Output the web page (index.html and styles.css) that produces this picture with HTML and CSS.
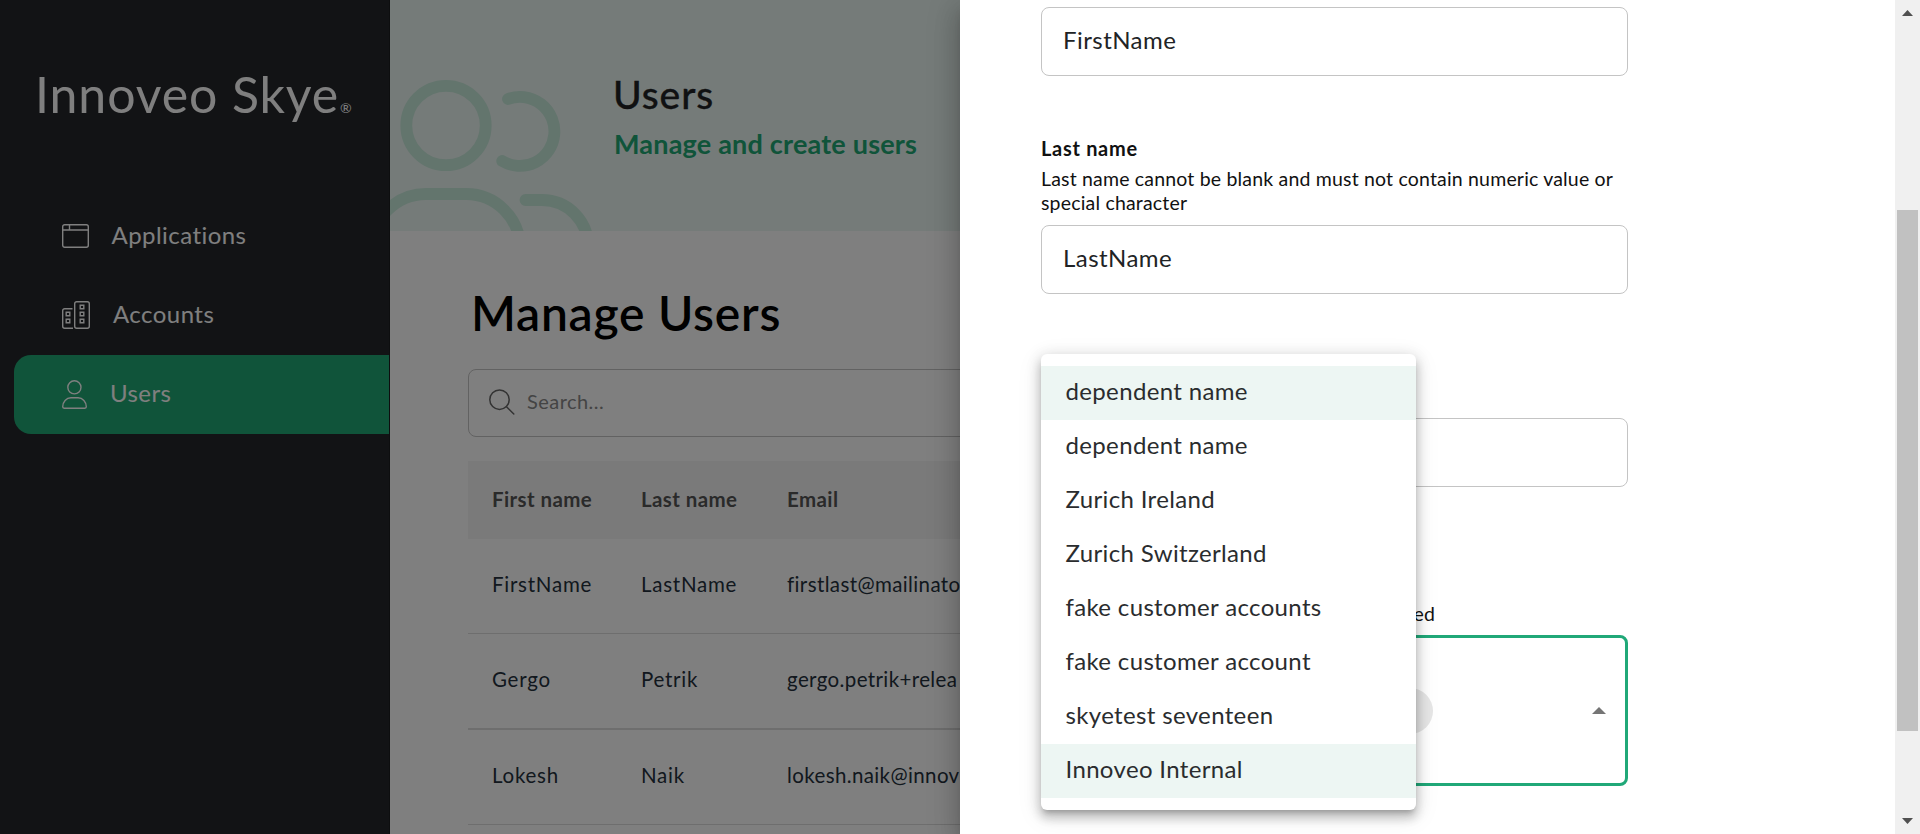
FILE: index.html
```html
<!DOCTYPE html>
<html lang="en">
<head>
<meta charset="utf-8">
<title>Innoveo Skye - Users</title>
<link rel="stylesheet" href="styles.css">
</head>
<body>
<div class="app">
  <nav class="sidebar">
    <div class="logo">Innoveo Skye<span class="logo-reg">®</span></div>
    <a class="nav-item">
      <svg width="27" height="24" viewBox="0 0 27 24" fill="none" stroke="currentColor" stroke-width="1.4"><rect x=".7" y=".7" width="25.6" height="22.6" rx="2"/><path d="M.7 6h25.600M7.500.7v5.300"/></svg>
      <span class="nav-label nav-apps">Applications</span>
    </a>
    <a class="nav-item">
      <svg width="28" height="28" viewBox="0 0 28 28" fill="none" stroke="currentColor" stroke-width="1.4"><rect x="12.7" y=".7" width="14.6" height="26.6" rx="2"/><path d="M10.5 7.700H2.700a2 2 0 0 0-2 2v15.600a2 2 0 0 0 2 2h8.300"/><path d="M4.200 11.200h3.600v3.600H4.200zM4.200 18.200h3.600v3.600H4.200zM18.200 4.200h3.600v3.600h-3.600zM18.200 11.200h3.600v3.600h-3.600zM18.200 18.200h3.600v3.600h-3.600z"/></svg>
      <span class="nav-label">Accounts</span>
    </a>
    <a class="nav-item active">
      <svg width="25" height="29" viewBox="0 0 25 29" fill="none" stroke="currentColor" stroke-width="1.4"><circle cx="12.4" cy="7.3" r="6.6"/><path d="M.7 26.800c0-5 3.600-9 8.300-9h7c4.700 0 8.300 4 8.300 9 0 .9-.4 1.400-1.400 1.400H2.100c-1 0-1.400-.5-1.400-1.400z"/></svg>
      <span class="nav-label">Users</span>
    </a>
  </nav>

  <main class="main">
    <header class="banner">
      <svg class="banner-art" width="222" height="231" viewBox="0 0 222 231" fill="none" stroke="currentColor" stroke-width="11.8" stroke-linecap="round"><circle cx="56" cy="125.500" r="39.700"/><path d="M118 99A34.500 34.500 0 1 1 112.200 161"/><path d="M-18 248a54 54 0 0 1 54-54h40a54 54 0 0 1 54 54"/><path d="M135.500 200h16.500a46 46 0 0 1 46 46"/></svg>
      <div class="banner-text">
        <h2 class="banner-title">Users</h2>
        <p class="banner-sub">Manage and create users</p>
      </div>
    </header>
    <section class="content">
      <h1 class="page-title">Manage Users</h1>
      <div class="search">
        <svg width="26" height="27" viewBox="0 0 26 27" fill="none" stroke="currentColor" stroke-width="1.500" stroke-linecap="round"><circle cx="10.500" cy="10.700" r="9.700"/><path d="M17.500 17.700l7.300 7.300"/></svg>
        <span class="search-text">Search...</span>
      </div>
      <div class="table">
        <div class="row head"><span>First name</span><span>Last name</span><span>Email</span></div>
        <div class="row"><span>FirstName</span><span>LastName</span><span class="email">firstlast@mailinato</span></div>
        <div class="row thick"><span>Gergo</span><span>Petrik</span><span class="email">gergo.petrik+relea</span></div>
        <div class="row"><span>Lokesh</span><span>Naik</span><span class="email">lokesh.naik@innov</span></div>
      </div>
    </section>
  </main>
  <div class="backdrop"></div>

  <aside class="drawer">
    <form class="form">
      <div class="input">FirstName</div>
      <div class="field">
        <div class="label">Last name</div>
        <div class="desc">Last name cannot be blank and must not contain numeric value or special character</div>
        <div class="input">LastName</div>
      </div>
      <div class="input input-email"></div>
      <div class="field-accounts">
        <div class="desc desc-required">required</div>
        <div class="select">
          <span class="chip"></span>
          <svg width="14" height="7" viewBox="0 0 14 7"><path d="M0 7l7-7 7 7z" fill="#757575"/></svg>
        </div>
      </div>
    </form>
    <div class="scrollbar">
      <svg width="11" height="6" viewBox="0 0 11 6"><path d="M0 6l5.500-6L11 6z" fill="#505050"/></svg>
      <div class="thumb"></div>
      <svg class="arrow-down" width="11" height="6" viewBox="0 0 11 6"><path d="M0 0l5.500 6L11 0z" fill="#505050"/></svg>
    </div>
    <ul class="menu">
      <li class="selected">dependent name</li>
      <li>dependent name</li>
      <li>Zurich Ireland</li>
      <li>Zurich Switzerland</li>
      <li>fake customer accounts</li>
      <li>fake customer account</li>
      <li>skyetest seventeen</li>
      <li class="selected">Innoveo Internal</li>
    </ul>
  </aside>
</div>
</body>
</html>
```

FILE: styles.css
```css
* { box-sizing: border-box; }
body {
  margin: 0;
  font-family: Lato, "Open Sans", sans-serif;
  background: #fff;
  overflow: hidden;
}
h1, h2, p, ul { margin: 0; padding: 0; }

.app {
  position: relative;
  display: flex;
  width: 1920px;
  height: 834px;
  overflow: hidden;
}

/* Sidebar */
.sidebar {
  width: 390px;
  flex: none;
  background: #24262a;
  border-right: 1px solid #1a1c1f;
  color: #fff;
}
.logo {
  height: 197px;
  padding: 64px 0 0 35px;
  font-size: 50px;
  line-height: 60px;
  letter-spacing: .9px;
  white-space: nowrap;
}
.logo-reg { font-size: 14px; letter-spacing: 0; margin-left: 1px; }
.nav-item {
  display: flex;
  align-items: center;
  gap: 23px;
  height: 79px;
  margin-left: 14px;
  padding: 0 0 1px 48px;
  border-radius: 17px 0 0 17px;
}
.nav-item.active { background: #20a874; }
.nav-label {
  font-size: 24px;
  line-height: 30px;
  letter-spacing: .45px;
  padding-bottom: 3px;
}
.nav-apps { margin-left: -.5px; }

/* Main page */
.main { width: 570px; flex: none; overflow: hidden; }
.banner {
  display: flex;
  height: 231px;
  background: #ebf6f2;
}
.banner-art { flex: none; color: #c6eadb; }
.banner-text { padding: 70px 0 0 1px; white-space: nowrap; }
.banner-title {
  font-size: 39px;
  line-height: 48px;
  font-weight: 500;
  letter-spacing: .9px;
  color: #212325;
  -webkit-text-stroke: .3px currentColor;
}
.banner-sub {
  margin: 8px 0 0 1px;
  font-size: 27px;
  line-height: 36px;
  font-weight: 700;
  letter-spacing: .2px;
  color: #20a874;
}
.content { padding-left: 78px; }
.page-title {
  padding-top: 53px;
  margin: 0 0 27px 3px;
  font-size: 48px;
  line-height: 58px;
  font-weight: 600;
  letter-spacing: .75px;
  color: #000;
}
.search {
  display: flex;
  align-items: center;
  gap: 12px;
  width: 900px;
  height: 68px;
  padding: 0 0 1px 20px;
  border: 1px solid #c4c4c4;
  border-radius: 8px;
  color: #666;
}
.search-text {
  font-size: 20px;
  line-height: 24px;
  padding-bottom: 3px;
  letter-spacing: .45px;
  color: #888;
}
.table { width: 900px; margin-top: 24px; }
.row {
  display: grid;
  grid-template-columns: 149px 146px 1fr;
  align-items: center;
  height: 95px;
  padding: 0 0 4px 24px;
  border-bottom: 1px solid #dcdcdc;
  font-size: 20.5px;
  line-height: 24px;
  letter-spacing: .75px;
  color: #24303c;
}
.row.head {
  height: 78px;
  padding-bottom: 3px;
  border: 0;
  background: #f5f5f5;
  font-weight: 700;
  letter-spacing: .4px;
  color: #555;
}
.row.thick { height: 96px; border-bottom-width: 2px; }
.email { letter-spacing: .38px; }

.backdrop {
  position: absolute;
  inset: 0;
  background: rgba(0, 0, 0, .5);
}

/* Drawer */
.drawer {
  position: relative;
  display: flex;
  justify-content: space-between;
  width: 960px;
  background: #fff;
  box-shadow: 0 8px 10px -5px rgba(0,0,0,.2), 0 16px 24px 2px rgba(0,0,0,.14), 0 6px 30px 5px rgba(0,0,0,.12);
}
.form { width: 668px; padding: 7px 0 0 81px; }
.field { margin-top: 60px; }
.label {
  font-size: 20px;
  line-height: 24px;
  font-weight: 700;
  letter-spacing: .7px;
  color: #111;
  margin-bottom: 7px;
}
.desc {
  font-size: 19.5px;
  line-height: 24px;
  letter-spacing: .18px;
  color: #111;
  margin-bottom: 10px;
}
.input {
  display: flex;
  align-items: center;
  height: 69px;
  padding: 0 0 4px 21px;
  border: 1px solid #c4c4c4;
  border-radius: 8px;
  font-size: 24px;
  letter-spacing: .45px;
  color: #212325;
}
.input-email { margin-top: 124px; }
.field-accounts { margin-top: 115px; }
.desc-required { width: 394px; text-align: right; margin-bottom: 9px; }
.select {
  display: flex;
  align-items: center;
  justify-content: space-between;
  height: 151px;
  padding: 0 19px;
  border: 3px solid #20a878;
  border-radius: 8px;
}
.chip { width: 370px; height: 46px; border-radius: 23px; background: #e6e6e6; }

.scrollbar {
  display: flex;
  flex-direction: column;
  align-items: center;
  width: 25px;
  padding: 10px 0;
  background: #f0f0f0;
}
.thumb { width: 21px; height: 521px; margin-top: 194px; background: #c1c1c1; }
.arrow-down { margin-top: auto; }

.menu {
  position: absolute;
  left: 81px;
  top: 354px;
  width: 375px;
  padding: 12px 0;
  border-radius: 6px;
  background: #fff;
  list-style: none;
  box-shadow: 0 5px 5px -3px rgba(0,0,0,.2), 0 8px 10px 1px rgba(0,0,0,.14), 0 3px 14px 2px rgba(0,0,0,.12), 0 6px 24px 4px rgba(0,0,0,.06);
}
.menu li {
  height: 54px;
  padding-left: 24.5px;
  font-size: 24px;
  line-height: 50px;
  letter-spacing: .35px;
  color: #2a2c2e;
}
.menu .selected { background: #edf6f3; }
```
